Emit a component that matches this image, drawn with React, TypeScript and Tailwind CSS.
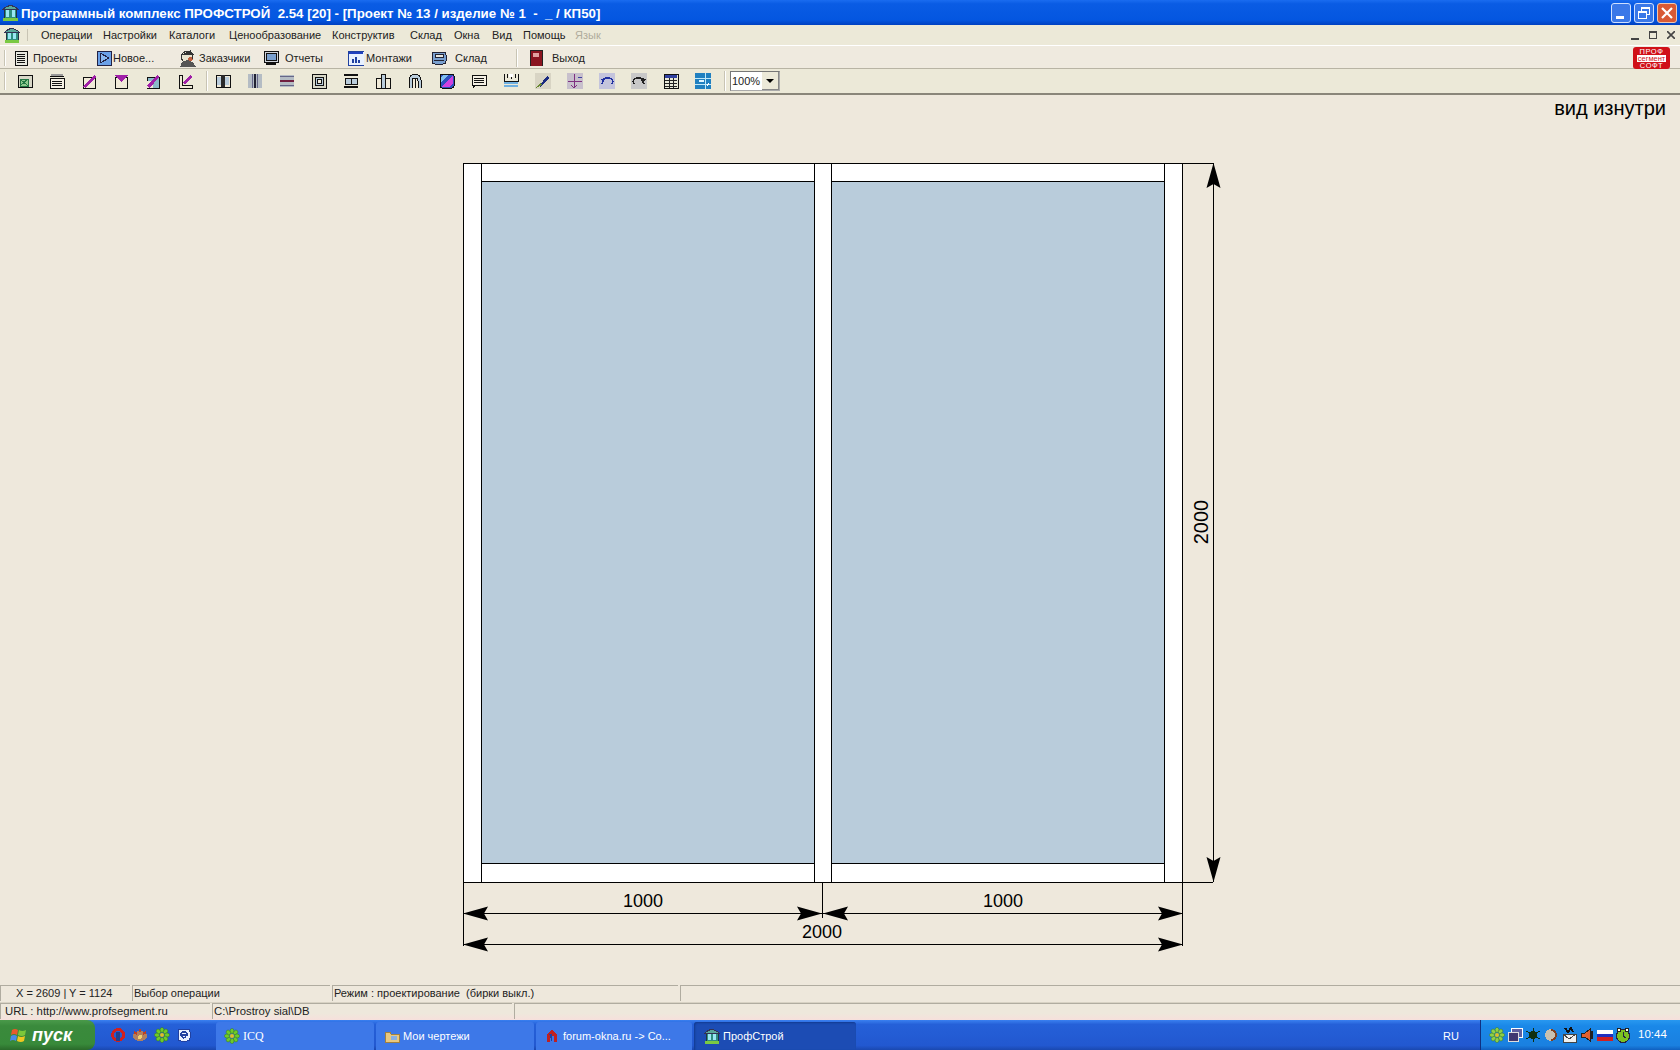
import React from "react";

const F = "font-['Liberation_Sans',Arial,sans-serif]";

function I({ children, s = 16, className = "" }: { children: React.ReactNode; s?: number; className?: string }) {
  return (
    <svg width={s} height={s} viewBox="0 0 16 16" className={"block shrink-0 " + className} shapeRendering="crispEdges">
      {children}
    </svg>
  );
}

const k = "#111";
const v = "#a020a8";

function House({ s = 16 }: { s?: number }) {
  return (
    <I s={s}>
      <rect x="2" y="4" width="12" height="10" fill="#2f8f7f" stroke="#234" strokeWidth="1" />
      <path d="M1 5 Q8 -2 15 5 Z" fill="#5aa89a" stroke="#335" strokeWidth="1" />
      <rect x="4" y="6" width="3" height="6" fill="#9ae6f4" />
      <rect x="9" y="6" width="3" height="6" fill="#9ae6f4" />
      <rect x="1" y="13" width="14" height="3" fill="#7ac943" />
    </I>
  );
}

const tb2: React.ReactNode[] = [
  <><rect x="1" y="2" width="14" height="12" fill="#d8d8c8" stroke={k} /><rect x="3" y="6" width="8" height="7" fill="#8fc98f" stroke="#274" /><path d="M3 6l8 7M11 6l-8 7" stroke="#274" /></>,
  <><rect x="1" y="5" width="14" height="10" fill="#f4f0e4" stroke={k} /><path d="M1 3h14M3 8h10M3 10h10M3 12h10" stroke={k} /><path d="M2 1h12v2H2z" fill="#999" /></>,
  <><rect x="2" y="4" width="12" height="11" fill="#f0ead8" stroke={k} /><path d="M2 14L13 2l2 2L5 15z" fill={v} /></>,
  <><rect x="2" y="4" width="12" height="11" fill="#f0ead8" stroke={k} /><path d="M1 2h14l-7 7z" fill={v} /></>,
  <><rect x="2" y="4" width="12" height="11" fill="#8ab8c8" stroke={k} /><rect x="2" y="8" width="6" height="7" fill="#f0ead8" /><path d="M2 13L12 2l2 2L5 15z" fill={v} /></>,
  <><path d="M2 2h3v10h10v3H2z" fill="#f0ead8" stroke={k} /><path d="M6 10L13 2l2 2-7 8z" fill={v} /><path d="M2 2v13h13" fill="none" stroke={k} /></>,
  <><rect x="1" y="2" width="14" height="12" fill="#f0ead8" stroke={k} /><rect x="6" y="2" width="4" height="12" fill="#2a2a2a" /><rect x="2" y="4" width="4" height="8" fill="#b9ccdb" /><rect x="10" y="4" width="4" height="8" fill="#b9ccdb" /></>,
  <><rect x="1" y="1" width="14" height="14" fill="#b4bcc4" /><rect x="7" y="1" width="2" height="14" fill="#223" /><rect x="5" y="1" width="1" height="14" fill="#668" /><rect x="10" y="1" width="1" height="14" fill="#668" /></>,
  <><rect x="1" y="2" width="14" height="12" fill="#b4bcc4" /><rect x="1" y="7" width="14" height="2" fill="#702040" /><rect x="1" y="3" width="14" height="1" fill="#668" /><rect x="1" y="12" width="14" height="1" fill="#668" /></>,
  <><rect x="1" y="1" width="14" height="14" fill="#d8d8c8" stroke={k} /><rect x="4" y="4" width="8" height="8" fill="#b9ccdb" stroke={k} /><rect x="6" y="6" width="4" height="4" fill="#f0ead8" stroke={k} /></>,
  <><path d="M1 2h14M1 14h14" stroke={k} strokeWidth="1.4" /><rect x="2" y="5" width="12" height="6" fill="#b9ccdb" stroke={k} /><path d="M8 5v6" stroke={k} /></>,
  <><rect x="1" y="5" width="5" height="10" fill="#f0ead8" stroke={k} /><rect x="10" y="5" width="5" height="10" fill="#f0ead8" stroke={k} /><rect x="6" y="1" width="4" height="14" fill="#b9ccdb" stroke={k} /></>,
  <><path d="M2 15V7a6 6 0 0 1 12 0v8" fill="#b9ccdb" stroke={k} /><path d="M5 15V8a3 3 0 0 1 6 0v7" fill="#f0ead8" stroke={k} /><path d="M8 5v10" stroke={k} /></>,
  <><rect x="1" y="1" width="14" height="14" rx="2" fill="#3050c0" stroke={k} /><path d="M2 14L14 2v8l-4 4z" fill="#d040e0" /><path d="M2 9l7-7H4L2 4z" fill="#80c0f0" /></>,
  <><rect x="1" y="2" width="14" height="10" fill="#f4f0e4" stroke={k} /><path d="M3 5h10M3 7h10M3 9h10" stroke={k} /><path d="M2 12v3l3-3z" fill={k} /></>,
  <><path d="M1 1v7h14V1M4 1v4M8 1v5M12 1v4" fill="none" stroke={k} /><rect x="6" y="1" width="4" height="3" fill="#fff" /><rect x="1" y="9" width="14" height="2" fill="#70b0e0" /><rect x="1" y="12" width="14" height="2" fill="#70b0e0" /></>,
  <><rect x="0" y="0" width="16" height="16" fill="#d8d4c4" /><path d="M4 13L12 3l2 2-8 9z" fill="#1a2a80" /><path d="M1 15l4-5 2 2z" fill="#6a8a30" /></>,
  <><rect x="0" y="0" width="16" height="16" fill="#c8c0cc" /><path d="M7 1v14M1 8h14M4 12l3 3 3-3" fill="none" stroke="#803080" /><path d="M11 4h4" stroke="#4040a0" /></>,
  <><rect x="0" y="0" width="16" height="16" fill="#c4c4dc" /><path d="M3 11Q4 4 10 5t3 6" fill="none" stroke="#2030a0" strokeWidth="1.4" /><path d="M1 6l5-1-1 5z" fill="#2030a0" /></>,
  <><rect x="0" y="0" width="16" height="16" fill="#c8c8c8" /><path d="M13 11Q12 4 6 5t-3 6" fill="none" stroke="#222" strokeWidth="1.4" /><path d="M15 6l-5-1 1 5z" fill="#222" /></>,
  <><rect x="1" y="1" width="14" height="14" fill="#e8e8d8" stroke={k} /><rect x="2" y="2" width="12" height="3" fill="#3040a0" /><path d="M2 7h12M2 10h12M2 13h12M6 5v10M10 5v10" stroke="#222" /></>,
  <><rect x="0" y="0" width="16" height="16" fill="#2080c0" /><path d="M0 5h16M0 11h16M10 0v16" stroke="#c0e8f8" /><rect x="4" y="7" width="5" height="2" fill="#e0f4ff" /><path d="M12 13l2-3" stroke="#fff" /></>,
];

const WinFlag = () => (
  <svg width="18" height="18" viewBox="0 0 18 18" className="block shrink-0">
    <path d="M2 4q3-2 6 0l-1 5q-3-2-6 0z" fill="#e85a2a" />
    <path d="M9 4q3 2 7 0l-1 5q-3 2-7 0z" fill="#7cc83a" />
    <path d="M1 10q3-2 6 0l-1 5q-3-2-6 0z" fill="#4a8ae8" />
    <path d="M8 10q3 2 7 0l-1 5q-3 2-7 0z" fill="#f0c820" />
  </svg>
);

const Icq = ({ c = "#6ecb2a" }: { c?: string }) => (
  <svg width="16" height="16" viewBox="0 0 16 16" className="block shrink-0">
    {[0, 45, 90, 135, 180, 225, 270, 315].map((a) => (
      <ellipse key={a} cx="8" cy="3" rx="2" ry="2.6" fill={c} stroke="#2a6a10" strokeWidth="0.4" transform={`rotate(${a} 8 8)`} />
    ))}
    <circle cx="8" cy="8" r="2" fill="#e0c020" />
  </svg>
);

function Arrow({ x, y, dir }: { x: number; y: number; dir: "l" | "r" | "u" | "d" }) {
  const rot = { l: 0, r: 180, u: 90, d: 270 }[dir];
  return <path d="M0 0 L25 -7 L21 0 L25 7 Z" transform={`translate(${x} ${y}) rotate(${rot})`} fill="#000" />;
}

function Drawing() {
  return (
    <svg width="800" height="810" viewBox="440 150 800 810" className="block ml-[440px] mt-[31px]" fontFamily="'Liberation Sans',Arial,sans-serif" fontSize="18" fill="#000">
      <g shapeRendering="crispEdges">
        <rect x="463.5" y="163.5" width="719" height="719" fill="#fff" stroke="#000" />
        <rect x="481.5" y="181.5" width="333" height="682" fill="#b9ccdb" stroke="#000" />
        <rect x="831.5" y="181.5" width="333" height="682" fill="#b9ccdb" stroke="#000" />
        <path d="M481.5 163.5v18M814.5 163.5v18M831.5 163.5v18M1164.5 163.5v18M481.5 863.5v19M814.5 863.5v19M831.5 863.5v19M1164.5 863.5v19" stroke="#000" fill="none" />
        <path d="M463.5 882v64M1182.5 882v64M822.5 882v36M1183 163.5h30M1183 882.5h30M1213.5 163v719M463 913.5h720M463 944.5h720" stroke="#000" fill="none" />
      </g>
      <Arrow x={463} y={913.5} dir="l" />
      <Arrow x={822} y={913.5} dir="r" />
      <Arrow x={823} y={913.5} dir="l" />
      <Arrow x={1183} y={913.5} dir="r" />
      <Arrow x={463} y={944.5} dir="l" />
      <Arrow x={1183} y={944.5} dir="r" />
      <Arrow x={1213.5} y={163} dir="u" />
      <Arrow x={1213.5} y={882} dir="d" />
      <text x="643" y="907" textAnchor="middle">1000</text>
      <text x="1003" y="907" textAnchor="middle">1000</text>
      <text x="822" y="938" textAnchor="middle">2000</text>
      <text x="0" y="0" textAnchor="middle" fontSize="20" transform="translate(1208 522) rotate(-90)">2000</text>
    </svg>
  );
}

const menu: [string, string][] = [
  ["Операции", "w-[62px]"],
  ["Настройки", "w-[66px]"],
  ["Каталоги", "w-[60px]"],
  ["Ценообразование", "w-[103px]"],
  ["Конструктив", "w-[78px]"],
  ["Склад", "w-[44px]"],
  ["Окна", "w-[38px]"],
  ["Вид", "w-[31px]"],
  ["Помощь", "w-[52px]"],
];

const tb1: { label: string; w: string; lp: string; icon: React.ReactNode }[] = [
  { label: "Проекты", w: "w-[83px]", lp: "ml-[4px]", icon: <I><rect x="2" y="1" width="12" height="14" fill="#e8e8e0" stroke={k} /><path d="M4 4h8M4 6h8M4 8h8M4 10h8M4 12h8" stroke={k} /></I> },
  { label: "Новое...", w: "w-[82px]", lp: "ml-[1px]", icon: <I><rect x="1" y="1" width="14" height="14" fill="#6aa0e8" stroke="#224" /><path d="M4 3l9 5-9 5z" fill="#8ab8f0" stroke="#224" /></I> },
  { label: "Заказчики", w: "w-[85px]", lp: "ml-[3px]", icon: <I s={18}><circle cx="8" cy="7" r="5" fill="#e8e4d0" stroke="#333" /><path d="M2 16Q3 10 8 10t8 6z" fill="#555" /><path d="M3 5l8-4 3 4z" fill="#333" /><circle cx="11" cy="9" r="2" fill="#c06040" /></I> },
  { label: "Отчеты", w: "w-[85px]", lp: "ml-[6px]", icon: <I><rect x="1" y="1" width="14" height="11" fill="#d0d4dc" stroke={k} /><rect x="3" y="3" width="10" height="7" fill="#7aa0d0" stroke={k} /><path d="M3 14h10" stroke={k} strokeWidth="2" /></I> },
  { label: "Монтажи", w: "w-[83px]", lp: "ml-[2px]", icon: <I><rect x="0" y="1" width="16" height="14" fill="#e8f0ff" stroke="#2040a0" /><rect x="1" y="2" width="14" height="2" fill="#2040c0" /><path d="M4 13V9h2v4zM7 13V7h2v6zM10 13V10h2v3z" fill="#2040a0" /></I> },
  { label: "Склад", w: "w-[86px]", lp: "ml-[8px]", icon: <I><rect x="1" y="2" width="14" height="12" rx="3" fill="#7aa0d0" stroke="#223" /><rect x="4" y="4" width="8" height="3" fill="#e8e8e0" stroke="#223" /><path d="M3 10h10" stroke="#223" /></I> },
];

export default function App() {
  return (
    <div className={`${F} w-[1680px] h-[1050px] flex flex-col overflow-hidden bg-[#eee8dc] text-[11px] text-black`}>
      {/* title bar */}
      <div className="h-[25px] shrink-0 flex items-center pl-[2px] pr-[3px] bg-[linear-gradient(#1a6cf0,#0a5ce4_15%,#0456e0_80%,#0040c0)] text-white">
        <House s={17} />
        <span className="ml-[2px] text-[13.3px] font-bold whitespace-pre mt-[2px]">Программный комплекс ПРОФСТРОЙ  2.54 [20] - [Проект № 13 / изделие № 1  -  _ / КП50]</span>
        <div className="ml-auto flex gap-[3px]">
          <div className="w-[20px] h-[20px] rounded-[3px] border border-[#cfe0ff] bg-[#3a78e8] flex items-end pl-[4px] pb-[3px]"><div className="w-[8px] h-[3px] bg-white" /></div>
          <div className="w-[20px] h-[20px] rounded-[3px] border border-[#cfe0ff] bg-[#3a78e8] relative">
            <div className="absolute left-[6px] top-[3px] w-[9px] h-[8px] border border-white border-t-2" />
            <div className="absolute left-[3px] top-[7px] w-[9px] h-[8px] border border-white border-t-2 bg-[#3a78e8]" />
          </div>
          <div className="w-[20px] h-[20px] rounded-[3px] border border-[#f0c8b0] bg-[#d85a35] flex items-center justify-center">
            <svg width="12" height="12" viewBox="0 0 12 12" className="block"><path d="M1 1l10 10M11 1L1 11" stroke="#fff" strokeWidth="2.2" /></svg>
          </div>
        </div>
      </div>

      {/* menu */}
      <div className="h-[20px] shrink-0 flex items-center bg-[#ece9d8] pl-[4px] pr-[5px] text-[#222]">
        <House s={16} />
        <div className="ml-[7px] w-px h-[12px] bg-[#c8c4b4]" />
        <div className="ml-[13px] flex">
          {menu.map(([m, w]) => (
            <span key={m} className={w}>{m}</span>
          ))}
          <span className="text-[#b0ac9c]">Язык</span>
        </div>
        <div className="ml-auto flex items-center gap-[10px] text-[#444]">
          <div className="w-[8px] h-[2px] bg-[#444] mt-[7px]" />
          <div className="w-[8px] h-[8px] border border-[#444] border-t-2" />
          <svg width="8" height="8" viewBox="0 0 8 8" className="block"><path d="M0 0l8 8M8 0L0 8" stroke="#444" strokeWidth="1.6" /></svg>
        </div>
      </div>

      {/* toolbar 1 */}
      <div className="h-[24px] shrink-0 flex items-center border-t border-t-white border-b border-b-[#b8b4a4] bg-[#efeadf] pl-[4px] pr-[10px] pt-[2px] text-[#222]">
        <div className="w-[2px] h-[16px] border-l border-l-[#c8c4b4] border-r border-r-white mr-[7px]" />
        {tb1.map((t) => (
          <div key={t.label} className={`${t.w} flex items-center`}>
            {t.icon}
            <span className={t.lp}>{t.label}</span>
          </div>
        ))}
        <div className="w-[2px] h-[18px] border-l border-l-[#c8c4b4] border-r border-r-white ml-[-1px] mr-[10px]" />
        <I><rect x="2" y="0" width="12" height="16" fill="#8a1420" stroke="#222" /><rect x="5" y="3" width="6" height="4" fill="#e0a0a0" /></I>
        <span className="ml-[8px]">Выход</span>
        <div className="ml-auto w-[37px] h-[22px] rounded-[3px] bg-[#d01018] text-white text-[7.5px] leading-[7px] flex flex-col items-center justify-center tracking-[0.08em]">
          <span>ПРОФ</span>
          <span className="bg-white text-[#d01018] px-[1px] tracking-normal">сегмент</span>
          <span>СОФТ</span>
        </div>
      </div>

      {/* toolbar 2 */}
      <div className="h-[26px] shrink-0 flex items-center border-b-2 border-b-[#8a867a] bg-[#ece9d8] pl-[4px]">
        <div className="w-[2px] h-[18px] border-l border-l-[#c8c4b4] border-r border-r-white mr-[3px]" />
        {tb2.map((ic, i) => (
          <React.Fragment key={i}>
            <div className="w-[32px] flex justify-center"><I>{ic}</I></div>
            {i === 5 && <div className="w-[2px] h-[20px] ml-[5px] mr-[-1px] border-l border-l-[#c8c4b4] border-r border-r-white" />}
          </React.Fragment>
        ))}
        <div className="w-[2px] h-[20px] ml-[5px] border-l border-l-[#c8c4b4] border-r border-r-white" />
        <div className="ml-[4px] w-[50px] h-[20px] flex items-center justify-between border border-t-[#777] border-l-[#777] border-r-[#aaa] border-b-[#aaa] bg-white pl-[1px] text-[#222] text-[11px]">
          100%
          <div className="w-[17px] h-[18px] bg-[#ece9d8] flex items-center justify-center border-r border-b border-[#888]">
            <div className="w-0 h-0 border-x-[4px] border-x-transparent border-t-[4px] border-t-black" />
          </div>
        </div>
      </div>

      {/* canvas */}
      <div className="flex-1 min-h-0">
        <div className="text-right pr-[14px] pt-[2px] text-[20px] leading-[22px] text-black">вид изнутри</div>
        <Drawing />
      </div>

      {/* status 1 */}
      <div className="h-[18px] shrink-0 flex gap-[2px] border-b border-b-[#d8d2c4] bg-[#eee8dc] text-[#222]">
        {[
          ["X = 2609 | Y = 1124", "w-[130px] pl-[15px]"],
          ["Выбор операции", "w-[198px] pl-[1px]"],
          ["Режим : проектирование  (бирки выкл.)", "w-[346px] pl-[1px]"],
          ["", "flex-1"],
        ].map(([t, c], i) => (
          <div key={i} className={`${c} h-[16px] flex items-center whitespace-pre border-t border-l border-[#b0aca0]`}>{t}</div>
        ))}
      </div>

      {/* status 2 */}
      <div className="h-[17px] shrink-0 flex gap-[2px] bg-[linear-gradient(#eee8dc_60%,#f6e0dc)] text-[#222] text-[11.3px]">
        {[
          ["URL : http://www.profsegment.ru", "w-[210px] pl-[4px]"],
          ["C:\\Prostroy sial\\DB", "w-[300px] pl-[1px]"],
          ["", "flex-1"],
        ].map(([t, c], i) => (
          <div key={i} className={`${c} h-[16px] flex items-center border-t border-l border-[#b0aca0]`}>{t}</div>
        ))}
      </div>

      {/* taskbar */}
      <div className="h-[30px] shrink-0 flex items-stretch bg-[linear-gradient(#3a80f0,#2560d8_15%,#2258d0_85%,#1a48b0)] text-white text-[11px]">
        <div className="w-[95px] flex items-center gap-[4px] pl-[10px] rounded-r-[8px] bg-[linear-gradient(#4a9a4a,#3a8a3c_20%,#388a3a_80%,#2a6a2a)] text-[18px] font-bold italic">
          <WinFlag />
          <span>пуск</span>
        </div>
        <div className="w-[121px] flex items-center gap-[6px] pl-[15px]">
          <I><path d="M8 1a7 7 0 1 0 .1 0zM8 4a4 4 0 1 1-.1 0z" fill="#d02020" /><rect x="6" y="5" width="4" height="9" fill="#204090" /></I>
          <I><ellipse cx="8" cy="9" rx="7" ry="5" fill="#b08060" /><path d="M2 5l3 2M14 5l-3 2M8 2v3" stroke="#c04020" strokeWidth="2" /><circle cx="8" cy="10" r="2" fill="#f0d070" /></I>
          <Icq />
          <I><rect x="2" y="2" width="12" height="12" rx="3" fill="#e8f0ff" stroke="#2040a0" /><path d="M5 8a3 3 0 1 1 6 0H5a3 3 0 0 0 5 2" fill="none" stroke="#2040a0" strokeWidth="1.5" /></I>
        </div>
        <div className="flex gap-[2px] mt-[2px]">
          <div className="w-[158px] flex items-center gap-[3px] pl-[8px] rounded-t-[3px] bg-[#3d78e8]"><Icq /><span className="font-['Liberation_Serif',serif] text-[12px]">ICQ</span></div>
          <div className="w-[158px] flex items-center gap-[3px] pl-[8px] rounded-t-[3px] bg-[#3d78e8]">
            <I><path d="M1 4h5l1 2h8v8H1z" fill="#e8c880" stroke="#a08040" /><rect x="7" y="8" width="6" height="4" fill="#8ab0e0" /></I>
            <span>Мои чертежи</span>
          </div>
          <div className="w-[156px] flex items-center gap-[3px] pl-[8px] rounded-t-[3px] bg-[#3d78e8]">
            <I><path d="M3 14V6l5-4 5 4v8h-3V8H6v6z" fill="#c02020" /><path d="M8 14l-3-8h3z" fill="#2040a0" /></I>
            <span>forum-okna.ru -&gt; Co...</span>
          </div>
          <div className="w-[162px] flex items-center gap-[3px] pl-[10px] rounded-t-[3px] bg-[#1c4cb4] shadow-[inset_1px_1px_2px_#123a90]">
            <House /><span>ПрофСтрой</span>
          </div>
        </div>
        <div className="ml-auto w-[37px] flex items-center mt-[2px]">RU</div>
        <div className="w-[200px] flex items-center bg-[linear-gradient(#2898f0,#1a88e8_20%,#1a80e0_85%,#1060c0)] border-l border-l-[#103080] pl-[8px] gap-[2px]">
          <Icq c="#8ed04a" />
          <I><rect x="4" y="1" width="11" height="9" fill="#6060a0" stroke="#fff" /><rect x="1" y="5" width="10" height="9" fill="#403870" stroke="#ddd" /></I>
          <I><circle cx="8" cy="8" r="4" fill="#103010" /><path d="M1 4l14 8M15 4L1 12M8 1v14" stroke="#103010" /></I>
          <I><circle cx="8" cy="8" r="6" fill="#c8c0b0" /><path d="M8 3a5 5 0 0 1 0 10" fill="none" stroke="#804020" strokeWidth="2" /></I>
          <I><rect x="2" y="7" width="13" height="8" fill="#f0f0f0" stroke="#444" /><path d="M2 7l6 5 7-5" fill="none" stroke="#444" /><path d="M4 1l3 4 3-4 2 4" fill="none" stroke="#111" strokeWidth="2" /></I>
          <I><path d="M2 6h4l5-4v12l-5-4H2z" fill="#e06030" stroke="#222" /><path d="M13 4v8" stroke="#222" strokeWidth="2" /></I>
          <I><rect x="0" y="3" width="16" height="3.5" fill="#fff" /><rect x="0" y="6.5" width="16" height="3.5" fill="#2030c0" /><rect x="0" y="10" width="16" height="3.5" fill="#d02020" /></I>
          <I><circle cx="8" cy="9" r="6.5" fill="#7cc020" stroke="#224" /><path d="M8 5v4l3 2" fill="none" stroke="#224" /><circle cx="4" cy="3" r="2" fill="#ffe" stroke="#222" /><circle cx="12" cy="3" r="2" fill="#ffe" stroke="#222" /></I>
          <span className="ml-[5px] text-[11.5px]">10:44</span>
        </div>
      </div>
    </div>
  );
}
